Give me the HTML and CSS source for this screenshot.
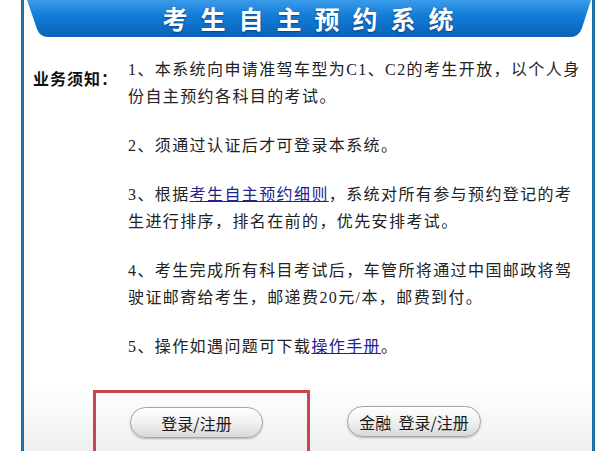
FILE: index.html
```html
<!DOCTYPE html>
<html lang="zh-CN">
<head>
    <meta charset="UTF-8">
    <meta name="viewport" content="width=device-width, initial-scale=1.0">
    <title>考生自主预约系统</title>
    <link rel="stylesheet" href="styles.css">
</head>
<body>
    <div class="frame">
        <div class="banner">
            <h1>考生自主预约系统</h1>
        </div>

        <div class="notice">
            <div class="label">业务须知：</div>
            <div class="items">
                <p>1、本系统向申请准驾车型为C1、C2的考生开放，以个人身份自主预约各科目的考试。</p>
                <p>2、须通过认证后才可登录本系统。</p>
                <p>3、根据<a href="#">考生自主预约细则</a>，系统对所有参与预约登记的考生进行排序，排名在前的，优先安排考试。</p>
                <p>4、考生完成所有科目考试后，车管所将通过中国邮政将驾驶证邮寄给考生，邮递费20元/本，邮费到付。</p>
                <p>5、操作如遇问题可下载<a href="#">操作手册</a>。</p>
            </div>
        </div>

        <!-- login buttons, the first one is marked with a red box -->
        <div class="actions">
            <div class="highlight">
                <button class="login-btn">登录/注册</button>
            </div>
            <button class="login-btn finance">金融&nbsp; 登录/注册</button>
        </div>
    </div>
</body>
</html>
```

FILE: styles.css
```css
html, body {
    margin: 0;
    background-color: #FFFFFF;
    overflow: hidden;
}
body {
    font-family: 'Liberation Serif', 'Noto Sans CJK SC', serif;
    color: #222222;
    height: 451px;
}
.frame {
    margin-left: 21px;
    width: 568px;
    min-height: 480px;
    border-left: 3px solid #1F6FA6;
    border-right: 3px solid #1F6FA6;
    background: linear-gradient(to bottom, #FFFFFF 0, #FFFFFF 385px, #EDEDED 460px);
}
.banner {
    height: 37px;
    background: linear-gradient(to bottom, #3A9BEA 0%, #127BD6 45%, #0B62B8 100%);
    clip-path: path('M3 0 L567 0 L558 28 Q555 37 546 37 L24 37 Q16 37 13 29 Z');
    display: flex;
    justify-content: center;
    align-items: center;
}
.banner h1 {
    margin: 0;
    padding-left: 13px;
    font-family: 'Noto Sans CJK SC', sans-serif;
    font-size: 25px;
    font-weight: bold;
    letter-spacing: 13px;
    line-height: 37px;
    color: #FFFFFF;
    text-shadow: 0 1px 2px rgba(0, 40, 90, 0.6);
}
.notice {
    display: flex;
    margin-top: 19px;
}
.label {
    width: 95px;
    flex-shrink: 0;
    padding-left: 9px;
    margin-top: 10px;
    white-space: nowrap;
    font-size: 16px;
    font-weight: bold;
    letter-spacing: 1px;
    line-height: 27px;
    color: #111111;
}
.items {
    width: 460px;
}
.items p {
    margin: 0 0 22px 0;
    font-size: 16px;
    line-height: 27px;
    letter-spacing: 1.4px;
}
.items a {
    color: #23238F;
    text-decoration: underline;
}
.actions {
    display: flex;
    align-items: flex-start;
    margin-top: 8px;
    padding-left: 69px;
}
.highlight {
    width: 133px;
    padding: 14px 44px 30px 34px;
    border: 3px solid #C9464E;
}
.login-btn {
    width: 133px;
    height: 31px;
    padding: 0;
    border: 1px solid #A6A6A6;
    border-radius: 16px;
    background: linear-gradient(to bottom, #FFFFFF 0%, #F1F1F1 50%, #D9D9D9 100%);
    box-shadow: 0 1px 2px rgba(0, 0, 0, 0.25);
    font-family: 'Noto Sans CJK SC', sans-serif;
    font-size: 16px;
    color: #1A1A1A;
}
.finance {
    width: 134px;
    margin-left: 37px;
    margin-top: 16px;
}
```
